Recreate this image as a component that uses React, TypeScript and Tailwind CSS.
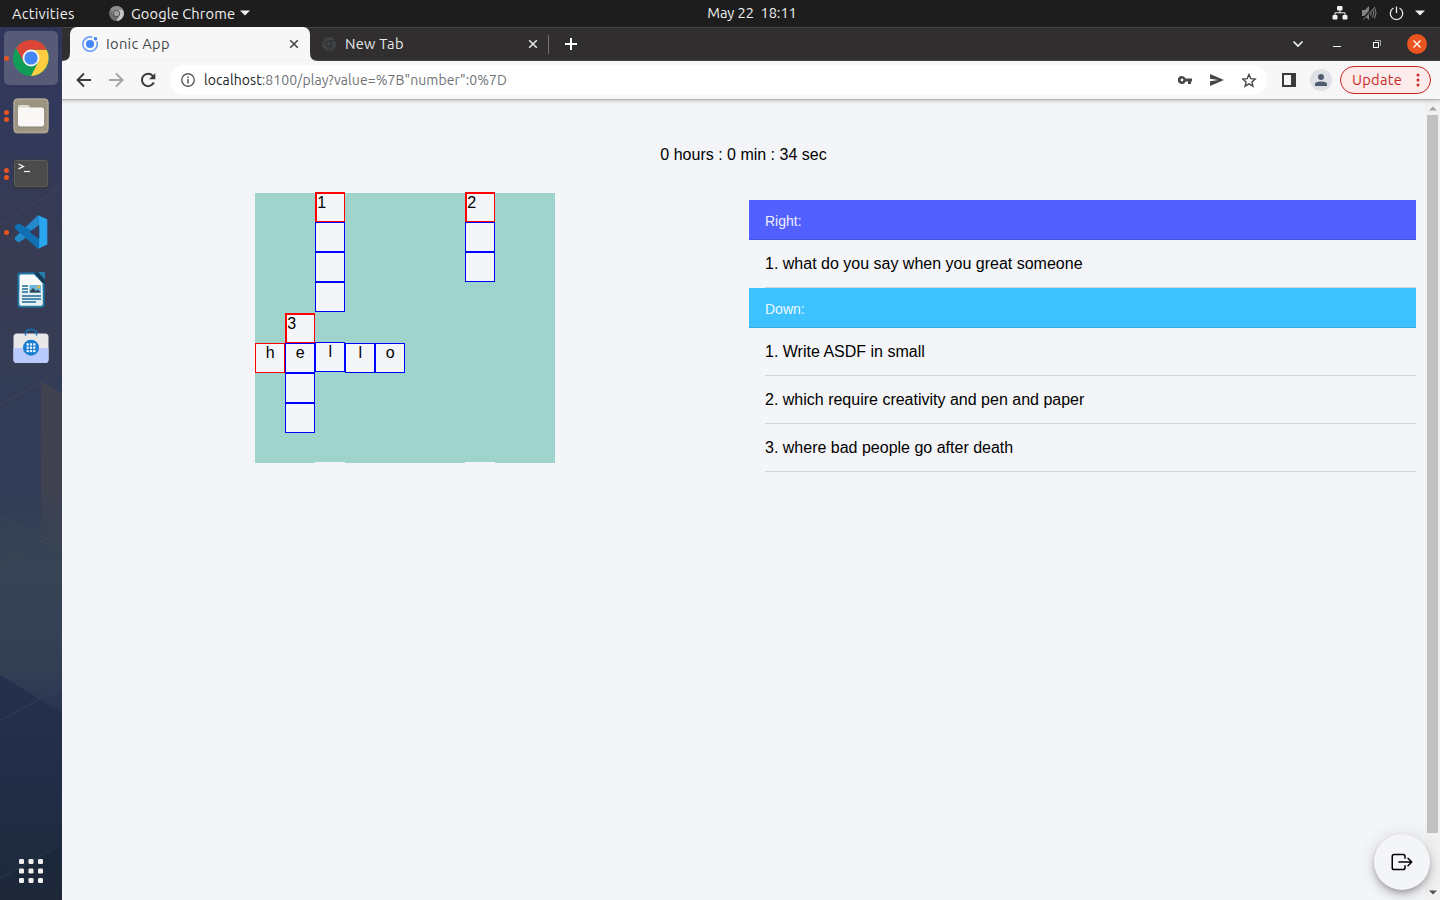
import type { ReactNode } from "react";

function ChromeLogo({ size, mono }: { size: number; mono?: "light" | "dark" }) {
  const red = mono === "light" ? "#8c8c8c" : mono === "dark" ? "#3f4345" : "#db4437";
  const green = mono === "light" ? "#6f6f6f" : mono === "dark" ? "#3f4345" : "#0f9d58";
  const yellow = mono === "light" ? "#c4c4c4" : mono === "dark" ? "#3f4345" : "#ffcd40";
  const ring = mono === "light" ? "#4d4d4d" : mono === "dark" ? "#302e2f" : "#f1f1f1";
  const core = mono === "light" ? "#a0a0a0" : mono === "dark" ? "#3f4345" : "#4285f4";
  return (
    <svg width={size} height={size} viewBox="0 0 48 48">
      <circle cx="24" cy="24" r="24" fill={green} />
      <path d="M24 13H44.8A24 24 0 0 1 24 48L33.5 29.5Z" fill={yellow} />
      <path d="M24 0A24 24 0 0 1 45.4 13H24L14.5 29.5L4.2 10.5A24 24 0 0 1 24 0Z" fill={red} />
      {mono === "dark" && (
        <path d="M24 13H46M33.5 29.5L23 48M14.5 29.5L4 10.5" stroke={ring} strokeWidth="3" fill="none" />
      )}
      <circle cx="24" cy="24" r="11.2" fill={ring} />
      <circle cx="24" cy="24" r={mono === "dark" ? 7.5 : 8.8} fill={core} />
    </svg>
  );
}

function FilesLogo() {
  return (
    <svg width="36" height="36" viewBox="0 0 36 36">
      <rect x="0.5" y="0.5" width="35" height="35" rx="4" fill="#9c9482" />
      <rect x="1" y="1" width="34" height="33" rx="3.5" fill="none" stroke="#b5ae9f" />
      <path d="M5 11V8.500Q5 7 6.500 7H14.500Q16 7 16.500 8.500L17 10V14H5Z" fill="#e0dbd0" />
      <rect x="5" y="10" width="26" height="19.500" rx="2.500" fill="#6d675b" opacity="0.4" />
      <rect x="5" y="9.500" width="26" height="19" rx="2.500" fill="#f9f8f6" />
    </svg>
  );
}

function TerminalLogo() {
  return (
    <svg width="36" height="30" viewBox="0 0 36 30">
      <rect x="0.5" y="0.5" width="35" height="29" rx="3" fill="#373737" />
      <rect x="1.500" y="1.500" width="33" height="26" rx="2" fill="#4b4b4b" stroke="#5c5c5c" />
      <path d="M5.500 5L10.500 7.400L5.500 9.800" stroke="#f5f5f5" strokeWidth="1.300" fill="none" />
      <path d="M11 12.500H17" stroke="#f5f5f5" strokeWidth="1.200" />
    </svg>
  );
}

function CodeLogo() {
  return (
    <svg width="34" height="34" viewBox="0 0 34 34">
      <path d="M24 0.300L33 4.300V10L4.500 27.500L0.800 24.500V22.500Z" fill="#2489ca" />
      <path d="M4.500 8.300L0.800 11.300V13.300L24 33.800L31 29V23Z" fill="#1070b3" />
      <path d="M24 0.300L33.300 4.500V29.500L24 33.800Q25.200 32.500 25.200 31V3Q25.200 1.500 24 0.300Z" fill="#2aa6ee" />
      <path d="M25.200 10V24L15.500 17Z" fill="#343a57" />
    </svg>
  );
}

function WriterLogo() {
  return (
    <svg width="28" height="36" viewBox="0 0 28 36">
      <path d="M3 0.500H19.500L27.500 9V32.500Q27.500 35.500 24.500 35.500H3Q0.500 35.500 0.500 32.500V3Q0.500 0.500 3 0.500Z" fill="#1e78a5" />
      <path d="M4 2.500H17L25.500 11V32Q25.500 33.500 24 33.500H4Q2.500 33.500 2.500 32V4Q2.500 2.500 4 2.500Z" fill="#fbfbfb" />
      <path d="M2.500 18H25.500V32Q25.500 33.500 24 33.500H4Q2.500 33.500 2.500 32Z" fill="#e8eff3" />
      <path d="M17 0.500H21L28 8V11H25.500Z" fill="#173c57" />
      <path d="M21 0H28V7.500Z" fill="#217daa" />
      <path d="M5 14H11M5 17H11M5 20H11M5 24H24M5 27H24M5 30H19" stroke="#1a6c98" strokeWidth="1.300" />
      <rect x="12.500" y="13" width="11.500" height="8" fill="#6cb8dc" />
      <circle cx="21.500" cy="15" r="1.400" fill="#efb632" />
      <path d="M13 20.500V19L16 16L19 19L21 17.500L23.500 20.500Z" fill="#34444e" />
    </svg>
  );
}

function SoftwareLogo() {
  return (
    <svg width="36" height="36" viewBox="0 0 36 36">
      <rect x="0.500" y="5.500" width="35" height="29.500" rx="3.500" fill="#e8e8e8" />
      <path d="M0.500 20H35.500V31.500Q35.500 35 32 35H4Q0.500 35 0.500 31.500Z" fill="#b8cbfb" />
      <path d="M12.500 7.500V6Q12.500 1.500 18 1.500Q23.500 1.500 23.500 6V7.500" stroke="#1470b8" strokeWidth="1.500" fill="none" />
      <circle cx="18" cy="19.700" r="8" fill="#1b7dd1" />
      {[14.7, 18, 21.3].map((x) =>
        [16.4, 19.7, 23].map((y) => (
          <rect key={`${x}-${y}`} x={x - 1.1} y={y - 1.1} width="2.2" height="2.2" fill="#f1f6fc" />
        )),
      )}
    </svg>
  );
}

function DockItem({ dots, active, children }: { dots: number; active?: boolean; children: ReactNode }) {
  return (
    <div className={`flex h-[54px] w-[54px] items-center rounded-[5px] ${active ? "bg-[#585b77]" : ""}`}>
      <div className="flex w-[5px] flex-col items-center gap-[2px]">
        {Array.from({ length: dots }, (_, i) => (
          <span key={i} className="size-[5px] rounded-full bg-[#e95420]" />
        ))}
      </div>
      <div className="flex w-[44px] items-center justify-center">{children}</div>
    </div>
  );
}

function Dock() {
  return (
    <aside className="relative z-20 flex w-[62px] shrink-0 flex-col items-center bg-[linear-gradient(180deg,#30365a_0px,#32395a_100px,#373b53_220px,#363d54_330px,#323c57_360px,#313d56_470px,#374455_540px,#343f54_640px,#2b3552_680px,#242e49_740px,#202b40_810px,#1d2738_873px)] pt-1">
      <svg className="absolute inset-0" width="62" height="873" viewBox="0 27 62 873">
        <defs>
          <linearGradient id="warm" x1="0" x2="0" y1="0" y2="1">
            <stop offset="0" stopColor="#42424f" stopOpacity="0.9" />
            <stop offset="0.6" stopColor="#42424f" stopOpacity="0.9" />
            <stop offset="1" stopColor="#3c4452" stopOpacity="0.3" />
          </linearGradient>
          <linearGradient id="night" x1="0" x2="0" y1="0" y2="1">
            <stop offset="0" stopColor="#232d4c" stopOpacity="0.8" />
            <stop offset="1" stopColor="#202b40" stopOpacity="0.2" />
          </linearGradient>
        </defs>
        <path d="M0 675L62 713V900H0Z" fill="url(#night)" />
        <path d="M41 382L62 394V553L41 541Z" fill="url(#warm)" />
        <path d="M0 45L62 82M0 225L62 186M0 405L62 370M0 516L62 553M0 564L62 530M41 382L62 394" stroke="#52564f" strokeWidth="1" opacity="0.4" fill="none" />
        <path d="M0 721L62 686M0 879L62 844" stroke="#365071" strokeWidth="1" opacity="0.5" />
        <path d="M0 879L62 844V900H0Z" fill="#1b2637" opacity="0.5" />
      </svg>
      <div className="relative flex flex-1 flex-col gap-1">
        <DockItem dots={1} active><ChromeLogo size={36} /></DockItem>
        <DockItem dots={2}><FilesLogo /></DockItem>
        <DockItem dots={2}><TerminalLogo /></DockItem>
        <DockItem dots={1}><CodeLogo /></DockItem>
        <DockItem dots={0}><WriterLogo /></DockItem>
        <DockItem dots={0}><div className="pb-[4px]"><SoftwareLogo /></div></DockItem>
      </div>
      <svg className="relative mb-[17px]" width="24" height="24" viewBox="0 0 24 24" fill="#f0f0ee">
        {[0, 9.5, 19].map((x) =>
          [0, 9.5, 19].map((y) => <rect key={`${x}-${y}`} x={x} y={y} width="5" height="5" rx="1.300" />),
        )}
      </svg>
    </aside>
  );
}

function TopBar() {
  return (
    <header className="flex h-[27px] shrink-0 items-center bg-[#1d1d1d] font-['Ubuntu','Noto_Sans',sans-serif] text-[14.67px] text-[#f0f0f0]">
      <div className="flex w-[620px] items-center pl-3">
        <span className="w-[97px] whitespace-nowrap tracking-[0.25px]">Activities</span>
        <ChromeLogo size={15} mono="light" />
        <span className="ml-[7px] w-[105px] whitespace-nowrap tracking-[0.1px]">Google Chrome</span>
        <svg className="mb-px ml-[4px]" width="10" height="6" viewBox="0 0 10 6"><path d="M0 0.500H10L5 5.500Z" fill="#f0f0f0" /></svg>
      </div>
      <div className="flex w-[264px] justify-center pb-px tracking-[-0.08px] whitespace-pre">May 22  18:11</div>
      <div className="mb-px flex flex-1 items-center justify-end pr-[15px]">
        <svg width="16" height="14" viewBox="0 0 16 14" fill="#f2f2f2">
          <rect x="5" y="0" width="5.500" height="4.500" rx="1" />
          <rect x="0.500" y="9" width="5" height="4.500" rx="1" />
          <rect x="10.500" y="9" width="5" height="4.500" rx="1" />
          <path d="M8 4V7M3 9V6.800H13V9" stroke="#f2f2f2" fill="none" />
        </svg>
        <svg className="ml-[13px]" width="16" height="16" viewBox="0 0 16 16" fill="none" stroke="#858585">
          <path d="M1 5H4L8 1V15L4 11H1Z" fill="#858585" stroke="none" />
          <path d="M9.500 5.500Q11 8 9.500 10.500M11.500 3.500Q14 8 11.500 12.500M13.500 2Q16.500 8 13.500 13.500" />
          <path d="M2 14L14 1" stroke="#1d1d1d" strokeWidth="2.500" />
          <path d="M2.500 14.500L14 2" />
        </svg>
        <svg className="ml-[12px]" width="15" height="15" viewBox="0 0 15 15" fill="none" stroke="#ececec" strokeWidth="1.300">
          <path d="M4.500 2A6.200 6.200 0 1 0 10.500 2M7.500 0.500V7" />
        </svg>
        <svg className="ml-[11px]" width="10" height="6" viewBox="0 0 10 6"><path d="M0 0.500H10L5 5.500Z" fill="#f0f0f0" /></svg>
      </div>
    </header>
  );
}

function Cross({ color }: { color: string }) {
  return (
    <svg width="10" height="10" viewBox="0 0 10 10" stroke={color} strokeWidth="1.600">
      <path d="M1.200 1.200L8.800 8.800M8.800 1.200L1.200 8.800" />
    </svg>
  );
}

function TabStrip() {
  return (
    <div className="flex h-[34px] shrink-0 bg-[#302e2f] font-['Ubuntu','Noto_Sans',sans-serif] text-[14.67px] shadow-[inset_0_1px_0_#454344]">
      <svg width="8" height="34" viewBox="0 0 8 34"><path d="M8 26Q8 34 0 34H8Z" fill="#f7f7f7" /></svg>
      <div className="flex w-[240px] items-center rounded-t-[7px] bg-[#f7f7f7] pl-3 text-[#45474a]">
        <svg width="16" height="16" viewBox="0 0 16 16" fill="none">
          <path d="M10.500 1.300A7.200 7.200 0 1 0 14.800 5.600" stroke="#6ea1fb" strokeWidth="1.700" />
          <circle cx="8" cy="8" r="4" fill="#4286f5" />
          <circle cx="13.500" cy="2.700" r="1.800" fill="#4286f5" />
        </svg>
        <span className="ml-2 flex-1 tracking-[0.3px]">Ionic App</span>
        <div className="pr-[11px]"><Cross color="#434548" /></div>
      </div>
      <svg width="8" height="34" viewBox="0 0 8 34"><path d="M0 26Q0 34 8 34H0Z" fill="#f7f7f7" /></svg>
      <div className="flex w-[230px] items-center pl-[4px] text-[#e8e8e8]">
        <ChromeLogo size={14} mono="dark" />
        <span className="ml-[9px] flex-1 tracking-[0.25px]">New Tab</span>
        <div className="pr-[10px]"><Cross color="#e5e5e5" /></div>
      </div>
      <div className="mt-[8px] h-[19px] w-px bg-[#737172]" />
      <svg className="mt-[11px] ml-[16px]" width="12" height="12" viewBox="0 0 12 12" stroke="#fff" strokeWidth="2"><path d="M6 0V12M0 6H12" /></svg>
      <div className="flex flex-1 items-center justify-end pr-[13px]">
        <svg width="12" height="8" viewBox="0 0 12 8" fill="none" stroke="#efefef" strokeWidth="1.700"><path d="M1.500 1.500L6 6L10.500 1.500" /></svg>
        <svg className="mt-[5px] ml-[29px]" width="8" height="1"><rect width="8" height="1" fill="#f4f4f4" /></svg>
        <svg className="ml-[32px]" width="8" height="8" viewBox="0 0 8 8" fill="none"><path d="M2 0.500H7.500V6" stroke="#a0a0a0" /><rect x="0.500" y="2.500" width="5" height="5" stroke="#fff" /></svg>
        <div className="ml-[26px] flex size-5 items-center justify-center rounded-full bg-[#e95420]">
          <svg width="8" height="8" viewBox="0 0 8 8" stroke="#fff" strokeWidth="1.300"><path d="M0.500 0.500L7.500 7.500M7.500 0.500L0.500 7.500" /></svg>
        </div>
      </div>
    </div>
  );
}

function Toolbar() {
  return (
    <div className="relative z-10 flex h-[38px] shrink-0 items-center bg-[#f7f7f7] pl-[14px] font-['Ubuntu','Noto_Sans',sans-serif] shadow-[0_1px_1px_#b5b6b5,0_2px_4px_#c5c7ca]">
      <svg width="16" height="16" viewBox="0 0 16 16" fill="none" stroke="#393b3f" strokeWidth="1.900"><path d="M15 8H2M8 1.500L1.500 8L8 14.500" /></svg>
      <svg className="ml-4" width="16" height="16" viewBox="0 0 16 16" fill="none" stroke="#a4a5a6" strokeWidth="1.900"><path d="M1 8H14M8 1.500L14.500 8L8 14.500" /></svg>
      <svg className="ml-4" width="16" height="16" viewBox="0 0 16 16" fill="none"><path d="M13.800 10.500A6.200 6.200 0 1 1 12.800 3.800L14 5.200" stroke="#393b3f" strokeWidth="2" /><path d="M15.300 1V7.200H9.100Z" fill="#393b3f" /></svg>
      <div className="ml-[14px] flex h-[30px] w-[1097px] items-center rounded-full bg-white pl-[11px]">
        <svg width="14" height="14" viewBox="0 0 14 14" fill="none" stroke="#5b5d61" strokeWidth="1.400"><circle cx="7" cy="7" r="6.200" /><path d="M7 6V10.500M7 3.500V5" strokeWidth="1.600" /></svg>
        <div className="ml-[9px] flex-1 whitespace-nowrap text-[14px] tracking-[0.09px] text-[#707276]"><span className="text-[#202124]">localhost</span>:8100/play?value=%7B"number":0%7D</div>
        <svg width="14" height="8" viewBox="0 0 14 8" fill="#464649"><path fillRule="evenodd" d="M4 0A4 4 0 0 1 7.600 2.600H14V5.400H13V8H10V5.400H7.600A4 4 0 1 1 4 0ZM4 2.600A1.400 1.400 0 1 0 4 5.400A1.400 1.400 0 1 0 4 2.600Z" /></svg>
        <svg className="ml-[18px]" width="14" height="12" viewBox="0 0 14 12" fill="#464649"><path d="M0 0L14 6L0 12V7.300L8.500 6L0 4.700Z" /></svg>
        <svg className="mr-[10px] ml-[18px]" width="15" height="15" viewBox="0 0 15 15" fill="none" stroke="#464649" strokeWidth="1.400"><path d="M7 1.500L8.800 5.600L13.200 6L9.900 8.900L10.900 13.200L7 10.900L3.100 13.200L4.100 8.900L0.800 6L5.200 5.600Z" /></svg>
      </div>
      <svg className="ml-[15px]" width="14" height="14" viewBox="0 0 14 14"><path fillRule="evenodd" d="M0 0H14V14H0ZM2 2V12H9V2Z" fill="#3a3b3d" /></svg>
      <div className="ml-[14px] flex size-[22px] items-center justify-center rounded-full bg-[#dee1e6]">
        <svg width="12" height="12" viewBox="0 0 12 12" fill="#515c70"><circle cx="6" cy="3" r="3" /><path d="M0 12V10Q0 7.500 6 7.500Q12 7.500 12 10V12Z" /></svg>
      </div>
      <div className="ml-[8px] flex h-[28px] w-[91px] items-center rounded-full border border-[#c5221f] bg-[#fbebea] pl-[11px] text-[14.67px] text-[#c92a27]">
        <span className="w-[64px] tracking-[0.25px]">Update</span>
        <svg width="4" height="14" viewBox="0 0 4 14" fill="#c92a27"><circle cx="2" cy="2" r="1.500" /><circle cx="2" cy="7" r="1.500" /><circle cx="2" cy="12" r="1.500" /></svg>
      </div>
    </div>
  );
}

type Cell = { kind: "empty" | "number" | "start" | "cell"; text?: string };
const e: Cell = { kind: "empty" };
const c: Cell = { kind: "cell" };
const letter = (text: string): Cell => ({ kind: "cell", text });
const number = (text: string): Cell => ({ kind: "number", text });

const columns: Cell[][] = [
  [e, e, e, e, e, { kind: "start", text: "h" }, e, e, e],
  [e, e, e, e, number("3"), letter("e"), c, c, e],
  [number("1"), c, c, c, e, letter("l"), e, e, e],
  [e, e, e, e, e, letter("l"), e, e, e],
  [e, e, e, e, e, letter("o"), e, e, e],
  [e, e, e, e, e, e, e, e, e],
  [e, e, e, e, e, e, e, e, e],
  [number("2"), c, c, e, e, e, e, e, e],
  [e, e, e, e, e, e, e, e, e],
  [e, e, e, e, e, e, e, e, e],
];

const cellStyles = {
  empty: "bg-[#9fd4cc]",
  number: "border border-t-2 border-l-2 border-[#ff0000] bg-[#f4f5f8] pl-[0.3px] text-left",
  start: "border border-[#ff0000] bg-[#f4f5f8] pl-[0.4px] text-center",
  cell: "border border-[#0000ff] bg-[#f4f5f8] pl-[0.4px] text-center",
};

function Board() {
  return (
    <div className="flex h-[270px] w-[300px] items-start">
      {columns.map((column, i) => (
        <div key={i} className={column[0].kind === "number" ? "-mt-px w-[30px]" : "w-[30px]"}>
          {column.map((cell, j) => (
            <div key={j} className={`h-[30px] w-[30px] leading-[18px] ${cellStyles[cell.kind]}`}>{cell.text}</div>
          ))}
        </div>
      ))}
    </div>
  );
}

function Clue({ children }: { children: ReactNode }) {
  return <li className="ml-4 h-12 border-b border-[#d2d4da] leading-[47px]">{children}</li>;
}

function Clues() {
  return (
    <ul className="w-[667px]">
      <li className="h-10 border-b border-[#4854e0] bg-[#5260ff] pt-px pl-4 text-[14px] leading-[40px] text-[#eeefff]">Right:</li>
      <Clue>1. what do you say when you great someone</Clue>
      <li className="h-10 border-b border-[#36abe0] bg-[#3dc2ff] pt-px pl-4 text-[14px] leading-[40px] text-[#ecf9ff]">Down:</li>
      <Clue>1. Write ASDF in small</Clue>
      <Clue>2. which require creativity and pen and paper</Clue>
      <Clue>3. where bad people go after death</Clue>
    </ul>
  );
}

export default function App() {
  return (
    <div className="flex h-[900px] w-[1440px] flex-col overflow-hidden bg-[#f4f5f8]">
      <TopBar />
      <div className="flex min-h-0 flex-1">
        <Dock />
        <div className="flex min-w-0 flex-1 flex-col">
          <TabStrip />
          <Toolbar />
          <div className="relative flex min-h-0 flex-1 font-['Liberation_Sans',Arial,sans-serif] text-[16px] text-black">
            <main className="min-w-0 flex-1">
              <div className="pt-[47px] text-center leading-[18px]">0 hours : 0 min : 34 sec</div>
              <div className="flex items-start pt-[29px] pl-[193px]">
                <Board />
                <div className="pt-[7px] pl-[194px]"><Clues /></div>
              </div>
            </main>
            <div className="flex w-[15px] flex-col items-center bg-[#f1f1f1]">
              <svg className="mt-[7px] mb-[4px]" width="8" height="5" viewBox="0 0 8 5"><path d="M0 4.500L4 0.500L8 4.500Z" fill="#a3a3a3" /></svg>
              <div className="h-[718px] w-[11px] bg-[#c1c1c1]" />
              <svg className="mt-auto mb-[5px]" width="8" height="5" viewBox="0 0 8 5"><path d="M0 0.500L4 4.500L8 0.500Z" fill="#505050" /></svg>
            </div>
            <button className="absolute right-[10px] bottom-[10px] flex size-14 items-center justify-center rounded-full bg-[#f4f5f8] shadow-[0_3px_5px_-1px_rgba(0,0,0,0.2),0_6px_10px_0_rgba(0,0,0,0.14),0_1px_18px_0_rgba(0,0,0,0.12)]">
              <svg width="24" height="24" viewBox="0 0 512 512" fill="none" stroke="#000" strokeWidth="32" strokeLinecap="round" strokeLinejoin="round">
                <path d="M320 176v-40a40 40 0 0 0-40-40H88a40 40 0 0 0-40 40v240a40 40 0 0 0 40 40h192a40 40 0 0 0 40-40v-40M384 176l80 80-80 80M191 256h273" />
              </svg>
            </button>
          </div>
        </div>
      </div>
    </div>
  );
}
